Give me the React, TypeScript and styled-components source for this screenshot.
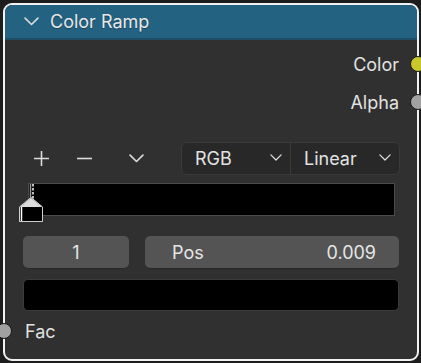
import React from "react";
import styled, { createGlobalStyle } from "styled-components";

const Global = createGlobalStyle`
  html, body { margin: 0; padding: 0; background: #1d1d1d; }
  body { font-family: Inter, "Noto Sans", sans-serif; }
`;

const Page = styled.div`
  width: 421px;
  height: 363px;
  padding: 3px 0 0 3px;
  box-sizing: border-box;
`;

const Node = styled.div`
  position: relative;
  width: 416px;
  height: 358px;
  box-sizing: border-box;
  border: 2px solid #f2f2f2;
  border-radius: 9px;
  background: #303030;
  display: flex;
  flex-direction: column;
`;

const Header = styled.div`
  height: 33px;
  background: #246282;
  border-radius: 7px 7px 0 0;
  border-bottom: 2px solid #1f4d66;
  display: flex;
  align-items: center;
  padding-left: 19px;
  gap: 11px;
  color: #e8e8e8;
  font-size: 18px;
  text-shadow: 0 1px 1px rgba(0,0,0,0.35);
`;

const Body = styled.div`
  display: flex;
  flex-direction: column;
  padding: 5px 0 0 0;
`;

const OutRow = styled.div`
  position: relative;
  height: 38px;
  display: flex;
  align-items: center;
  justify-content: flex-end;
  padding-right: 18px;
  color: #e2e2e2;
  font-size: 18px;
`;

const Socket = styled.div<{ $color: string; $side: "left" | "right" }>`
  position: absolute;
  top: 50%;
  ${(p) => (p.$side === "right" ? "right: -9px;" : "left: -9px;")}
  width: 14px;
  height: 14px;
  margin-top: -8px;
  border-radius: 50%;
  background: ${(p) => p.$color};
  border: 1px solid #1a1a1a;
`;

const Toolbar = styled.div`
  margin-top: 20px;
  height: 34px;
  display: flex;
  align-items: center;
  padding: 0 17px 0 20px;
`;

const IconButton = styled.div<{ $w: number }>`
  width: ${(p) => p.$w}px;
  height: 34px;
  display: flex;
  align-items: center;
  justify-content: center;
  color: #dcdcdc;
`;

const Spacer = styled.div`
  flex: 1;
`;

const SelectGroup = styled.div`
  width: 219px;
  height: 33px;
  display: flex;
  background: #282828;
  border: 1px solid #3a3a3a;
  border-radius: 6px;
  box-sizing: border-box;
`;

const Select = styled.div<{ $w: number; $divider?: boolean }>`
  width: ${(p) => p.$w}px;
  display: flex;
  align-items: center;
  justify-content: space-between;
  padding: 0 8px 0 13px;
  box-sizing: border-box;
  color: #e2e2e2;
  font-size: 18px;
  ${(p) => (p.$divider ? "border-right: 1px solid #3a3a3a;" : "")}
`;

const RampWrap = styled.div`
  margin: 8px 0 0 23px;
  width: 367px;
  height: 33px;
  position: relative;
`;

const RampBar = styled.div`
  width: 100%;
  height: 100%;
  box-sizing: border-box;
  background: #000;
  border: 1px solid #4a4a4a;
`;

const Marker = styled.svg`
  position: absolute;
  left: -10px;
  top: 0;
  overflow: visible;
`;

const FieldRow = styled.div`
  margin: 20px 0 0 18px;
  display: flex;
  gap: 16px;
  width: 376px;
`;

const Field = styled.div<{ $w: number; $center?: boolean }>`
  width: ${(p) => p.$w}px;
  height: 32px;
  border-radius: 5px;
  background: #545454;
  display: flex;
  align-items: center;
  justify-content: ${(p) => (p.$center ? "center" : "space-between")};
  padding: ${(p) => (p.$center ? "0" : "0 23px 0 27px")};
  box-sizing: border-box;
  color: #e6e6e6;
  font-size: 18px;
  box-shadow: 0 1px 0 rgba(0,0,0,0.15);
`;

const Swatch = styled.div`
  margin: 11px 0 0 18px;
  width: 376px;
  height: 32px;
  box-sizing: border-box;
  background: #000;
  border: 1px solid #3c3c3c;
  border-radius: 5px;
`;

const InRow = styled.div`
  position: relative;
  margin-top: 8px;
  height: 24px;
  display: flex;
  align-items: center;
  padding-left: 20px;
  color: #e2e2e2;
  font-size: 18px;
`;

const Chevron = ({ size = 14, w = 1.6 }: { size?: number; w?: number }) => (
  <svg width={size} height={size * 0.6} viewBox="0 0 14 8.4" fill="none">
    <path d="M1 1 L7 7 L13 1" stroke="#dcdcdc" strokeWidth={w} strokeLinecap="round" strokeLinejoin="round" />
  </svg>
);

export default function App() {
  return (
    <>
      <Global />
      <Page>
        <Node>
          <Header>
            <Chevron size={15} w={1.5} />
            <span>Color Ramp</span>
          </Header>
          <Body>
            <OutRow>
              Color
              <Socket $color="#c8c82a" $side="right" />
            </OutRow>
            <OutRow>
              Alpha
              <Socket $color="#a1a1a1" $side="right" />
            </OutRow>
            <Toolbar>
              <IconButton $w={32}>
                <svg width="17" height="17" viewBox="0 0 17 17">
                  <path d="M8.5 1 V16 M1 8.5 H16" stroke="#dcdcdc" strokeWidth="1.6" />
                </svg>
              </IconButton>
              <IconButton $w={54}>
                <svg width="17" height="17" viewBox="0 0 17 17">
                  <path d="M1 8.5 H16" stroke="#dcdcdc" strokeWidth="1.6" />
                </svg>
              </IconButton>
              <IconButton $w={50}>
                <Chevron size={15} w={1.5} />
              </IconButton>
              <Spacer />
              <SelectGroup>
                <Select $w={109} $divider>
                  <span>RGB</span>
                  <Chevron size={12} w={1.5} />
                </Select>
                <Select $w={108}>
                  <span>Linear</span>
                  <Chevron size={12} w={1.5} />
                </Select>
              </SelectGroup>
            </Toolbar>
            <RampWrap>
              <RampBar />
              <Marker width="26" height="42" viewBox="0 0 26 42">
                <line x1="12.5" y1="1" x2="12.5" y2="16" stroke="#9a9a9a" strokeWidth="1.5" />
                <line x1="15" y1="1" x2="15" y2="16" stroke="#ffffff" strokeWidth="1.5" strokeDasharray="2.5 1.5" />
                <path d="M1.5 24 L13 14.5 L24.5 24 L24.5 38.5 L1.5 38.5 Z" fill="#000" stroke="#8a8a8a" strokeWidth="1" />
                <path d="M2 24 L13 15 L24 24 Z" fill="#dcdcdc" />
                <line x1="3.5" y1="24" x2="3.5" y2="38" stroke="#ffffff" strokeWidth="1.5" />
                <path d="M1.5 24 L13 14.5 L24.5 24 L24.5 38.5 L1.5 38.5 Z" fill="none" stroke="#e0e0e0" strokeWidth="0.8" />
              </Marker>
            </RampWrap>
            <FieldRow>
              <Field $w={106} $center>1</Field>
              <Field $w={254}>
                <span>Pos</span>
                <span>0.009</span>
              </Field>
            </FieldRow>
            <Swatch />
            <InRow>
              Fac
              <Socket $color="#a1a1a1" $side="left" />
            </InRow>
          </Body>
        </Node>
      </Page>
    </>
  );
}
